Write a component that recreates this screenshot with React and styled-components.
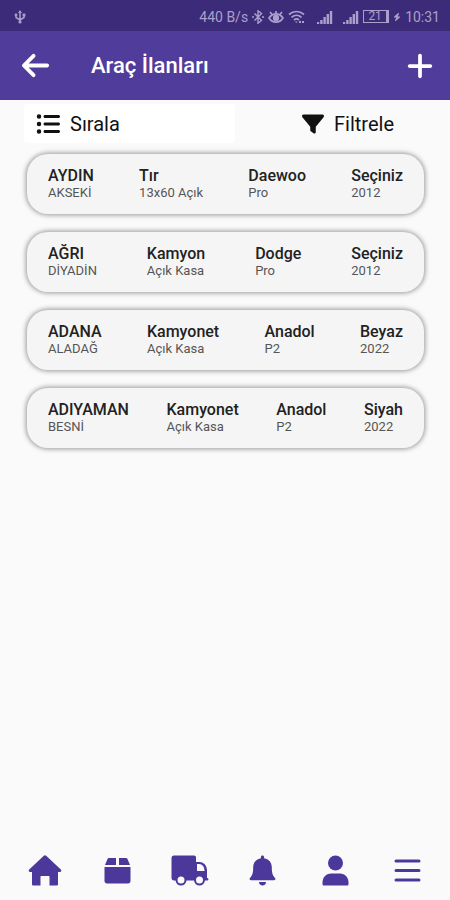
import styled, { createGlobalStyle } from "styled-components";
import { FaArrowLeft, FaBolt, FaFilter, FaListUl, FaPlus } from "react-icons/fa6";

const listings = [
  [
    ["AYDIN", "AKSEKİ"],
    ["Tır", "13x60 Açık"],
    ["Daewoo", "Pro"],
    ["Seçiniz", "2012"],
  ],
  [
    ["AĞRI", "DİYADİN"],
    ["Kamyon", "Açık Kasa"],
    ["Dodge", "Pro"],
    ["Seçiniz", "2012"],
  ],
  [
    ["ADANA", "ALADAĞ"],
    ["Kamyonet", "Açık Kasa"],
    ["Anadol", "P2"],
    ["Beyaz", "2022"],
  ],
  [
    ["ADIYAMAN", "BESNİ"],
    ["Kamyonet", "Açık Kasa"],
    ["Anadol", "P2"],
    ["Siyah", "2022"],
  ],
];

const UsbIcon = () => (
  <svg width="12" height="14" viewBox="0 0 12 14" fill="none" stroke="currentColor" strokeWidth="1.5">
    <path d="M6 2v10M2 5v2.5L6 10M10 5v2.5L6 10" />
    <path d="M6 0l2 3H4z" fill="currentColor" stroke="none" />
    <circle cx="6" cy="12" r="1.6" fill="currentColor" stroke="none" />
    <circle cx="2" cy="5" r="1.4" fill="currentColor" stroke="none" />
    <path d="M8.6 3.6h2.8v2.8H8.6z" fill="currentColor" stroke="none" />
  </svg>
);

const BluetoothIcon = () => (
  <svg width="12" height="14" viewBox="0 0 12 14" fill="none" stroke="currentColor" strokeWidth="1.4">
    <path d="M2.5 3.5l7 7L6 13.2V.8l3.5 2.7-7 7" />
    <path d="M0 7h2M10 7h2" strokeWidth="1.6" />
  </svg>
);

const EyeIcon = () => (
  <svg width="16" height="14" viewBox="0 0 16 14" fill="none" stroke="currentColor" strokeWidth="1.7">
    <path d="M1 8c2-3 4.3-4.2 7-4.2S13 5 15 8c-2 3-4.3 4.2-7 4.2S3 11 1 8z" />
    <circle cx="8" cy="8" r="2.3" fill="currentColor" />
    <path d="M8 3.5V1M4 4.5L2 2M12 4.5L14 2" />
  </svg>
);

const WifiIcon = () => (
  <svg width="17" height="14" viewBox="0 0 17 14" fill="none" stroke="currentColor" strokeWidth="1.7">
    <path d="M1 4.5c4.5-4 10.500-4 15 0M3.500 7.300c3-2.600 7-2.600 10 0M6 10c1.600-1.400 3.400-1.400 5 0" />
    <path d="M7 11.5h2.5L8.3 13zM11 11h2v2h-2zM14 11h2v2h-2z" fill="currentColor" stroke="none" />
  </svg>
);

const SignalIcon = () => (
  <svg width="16" height="14" viewBox="0 0 16 14" fill="currentColor">
    <path d="M0 12h2.2v2H0zM3.200 10h2.400v4H3.200zM6.400 7h2.400v7H6.400zM9.600 4H12v10H9.600zM12.800 1h2.400v13h-2.400z" />
  </svg>
);

const HomeIcon = () => (
  <svg width="34" height="31" viewBox="0 0 34 31" fill="currentColor">
    <path d="M15.8.8c.7-.7 1.700-.7 2.400 0l14.600 13.700c1 1 .4 2.500-1 2.500H30v12c0 1-.6 1.500-1.500 1.500h-7V22c0-.7-.3-1-1-1h-7c-.7 0-1 .3-1 1v8.500h-7C4.600 30.500 4 30 4 29V17H2.200c-1.400 0-2-1.500-1-2.500z" />
  </svg>
);

const BoxIcon = () => (
  <svg width="27" height="27" viewBox="0 0 27 27" fill="currentColor">
    <path d="M5.500 1H12v7H1l2.300-5.600C3.700 1.500 4.500 1 5.500 1zM15 1h6.500c1 0 1.800.5 2.200 1.400L26 8H15z" />
    <path d="M.5 10h26v14c0 1.500-1 2.500-2.500 2.500H3C1.500 26.500.5 25.500.5 24z" />
  </svg>
);

const TruckIcon = () => (
  <svg width="38" height="31" viewBox="0 0 38 31" fill="currentColor">
    <path
      fillRule="evenodd"
      d="M3 .5h20c1.400 0 2 .7 2 2v4.500h3.500c4.500 0 7.500 3.800 7.500 8.500v7.500h.5c1.300 0 1.300 2.500 0 2.500H3C1.500 25.500.5 24.500.5 23V3C.5 1.500 1.500.5 3 .5zM26 9v7h7.500c0-4-2-7-5.500-7z"
    />
    <circle cx="10" cy="25" r="4.500" fill="#fafafa" stroke="currentColor" strokeWidth="2" />
    <circle cx="28.500" cy="25" r="4.500" fill="#fafafa" stroke="currentColor" strokeWidth="2" />
  </svg>
);

const BellIcon = () => (
  <svg width="27" height="31" viewBox="0 0 27 31" fill="currentColor">
    <path d="M13.500.5c1 0 1.600.7 1.600 1.700v1c4.700.8 7.700 4.300 7.700 9 0 5.800.9 8.300 3.200 10.800.9 1.100.4 2.300-1 2.300H2c-1.400 0-1.900-1.200-1-2.300 2.300-2.500 3.200-5 3.200-10.800 0-4.700 3-8.200 7.700-9v-1c0-1 .6-1.700 1.600-1.700z" />
    <path d="M10 27h7c0 2-1.500 3.500-3.500 3.500S10 29 10 27z" />
  </svg>
);

const UserIcon = () => (
  <svg width="27" height="31" viewBox="0 0 27 31" fill="currentColor">
    <circle cx="13.500" cy="8" r="7.500" />
    <path d="M9 18.500h9c5 0 8.500 4 8.500 9v1.500c0 1-.6 1.500-1.500 1.500H2c-.9 0-1.500-.5-1.500-1.500v-1.500c0-5 3.500-9 8.500-9z" />
  </svg>
);

const MenuIcon = () => (
  <svg width="27" height="25" viewBox="0 0 27 25" stroke="currentColor" strokeWidth="3" strokeLinecap="round">
    <path d="M2 3h23M2 12.500h23M2 22h23" />
  </svg>
);

const tabs = [
  { label: "Ana Sayfa", icon: <HomeIcon /> },
  { label: "Yükler", icon: <BoxIcon /> },
  { label: "Araçlar", icon: <TruckIcon /> },
  { label: "Bildirimler", icon: <BellIcon /> },
  { label: "Profil", icon: <UserIcon /> },
  { label: "Menü", icon: <MenuIcon /> },
];

const App = () => {
  return (
    <>
      <GlobalStyle />
      <Screen>
        <StatusBar>
          <UsbIcon />
          <StatusGroup>
            <span>440 B/s</span>
            <BluetoothIcon />
            <EyeIcon />
            <WifiIcon />
            <Signals>
              <SignalIcon />
              <SignalIcon />
            </Signals>
            <Battery>21</Battery>
            <FaBolt size={8} />
            <span>10:31</span>
          </StatusGroup>
        </StatusBar>
        <Header>
          <IconButton aria-label="Geri">
            <FaArrowLeft size={31} />
          </IconButton>
          <h1>Araç İlanları</h1>
          <IconButton aria-label="İlan ekle">
            <FaPlus size={30} />
          </IconButton>
        </Header>
        <Toolbar>
          <ToolButton $highlight>
            <FaListUl size={24} />
            Sırala
          </ToolButton>
          <ToolButton>
            <FaFilter size={22} />
            Filtrele
          </ToolButton>
        </Toolbar>
        <List>
          {listings.map((listing, index) => (
            <Card key={index}>
              {listing.map(([title, detail]) => (
                <Cell key={title}>
                  <strong>{title}</strong>
                  <span>{detail}</span>
                </Cell>
              ))}
            </Card>
          ))}
        </List>
        <TabBar>
          {tabs.map((tab) => (
            <a key={tab.label} href="#" aria-label={tab.label}>
              {tab.icon}
            </a>
          ))}
        </TabBar>
      </Screen>
    </>
  );
};

const GlobalStyle = createGlobalStyle`
* {
  box-sizing: border-box;
}
body {
  margin: 0;
  background: #fafafa;
  font-family: Roboto, "Noto Sans", sans-serif;
}
button {
  border: none;
  background: transparent;
  font: inherit;
  color: inherit;
  cursor: pointer;
}
svg {
  display: block;
  flex-shrink: 0;
}
`;

const Screen = styled.div`
display: flex;
flex-direction: column;
min-height: 100vh;
`;

const StatusBar = styled.div`
display: flex;
align-items: center;
justify-content: space-between;
height: 31px;
padding: 2px 10px 0 14px;
background: #3b2b78;
color: #aaa0cc;
font-size: 14px;
`;

const StatusGroup = styled.div`
display: flex;
align-items: center;
gap: 4px;
`;

const Signals = styled.div`
display: flex;
gap: 10px;
padding-left: 8px;
`;

const Battery = styled.span`
width: 26px;
height: 13px;
border: 1px solid;
border-right-width: 3px;
font-size: 12px;
line-height: 11px;
text-align: center;
`;

const Header = styled.header`
display: flex;
align-items: center;
height: 69px;
padding: 0 15px 0 20px;
background: #503d9b;
color: #fff;
h1 {
  flex: 1;
  margin: 0 0 0 40px;
  font-size: 22px;
  font-weight: 500;
}
`;

const IconButton = styled.button`
padding: 0;
`;

const Toolbar = styled.div`
display: flex;
justify-content: space-between;
padding: 4px 24px 0;
`;

const ToolButton = styled.button`
display: flex;
align-items: center;
gap: 10px;
flex: ${(props) => (props.$highlight ? "0 1 211px" : "none")};
height: 39px;
padding: 0 ${(props) => (props.$highlight ? "12px" : "32px")};
border-radius: 4px;
background: ${(props) => (props.$highlight ? "#fff" : "transparent")};
color: #111;
font-size: 20px;
`;

const List = styled.main`
display: flex;
flex-direction: column;
flex: 1;
gap: 18px;
padding: 11px 26px 18px 27px;
`;

const Card = styled.article`
display: flex;
align-items: center;
justify-content: space-between;
height: 60px;
padding: 0 21px;
border-radius: 21px;
background: #f5f5f5;
box-shadow: 0 0 5px 1px rgba(0, 0, 0, 0.4);
`;

const Cell = styled.div`
display: flex;
flex-direction: column;
strong {
  font-size: 16px;
  line-height: 18px;
  font-weight: 500;
  color: #222;
}
span {
  font-size: 13px;
  line-height: 16px;
  color: #555;
}
`;

const TabBar = styled.nav`
display: grid;
grid-template-columns: repeat(6, 1fr);
height: 60px;
padding: 0 6px 0 9px;
a {
  display: flex;
  align-items: center;
  justify-content: center;
  color: #4c389b;
}
`;

export default App;
